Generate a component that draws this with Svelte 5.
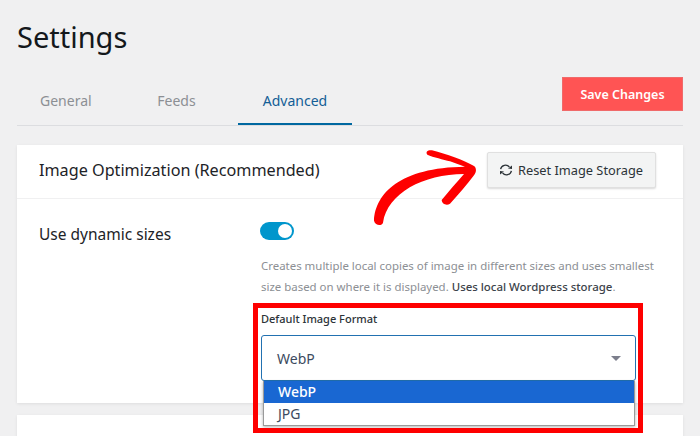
<script>
	const tabs = ['General', 'Feeds', 'Advanced'];
	let active = 'Advanced';
</script>

<div class="page">
	<h1>Settings</h1>

	<div class="tabbar">
		<nav>
			{#each tabs as tab}
				<span class="tab" class:active={tab === active}>{tab}</span>
			{/each}
		</nav>
		<button class="save">Save Changes</button>
	</div>

	<section class="card">
		<header>
			<h2>Image Optimization (Recommended)</h2>
			<button class="reset">
				<svg width="14" height="12" viewBox="0 0 14 12" fill="none" stroke="#2c3338" stroke-width="1.3">
					<path d="M1.6 5.2A5 5 0 0 1 10.4 3" />
					<path d="M12.4 6.8A5 5 0 0 1 3.6 9" />
					<path d="M9 4.6L13 5V1.6Z" fill="#2c3338" stroke="none" />
					<path d="M5 7.4L1 7V10.4Z" fill="#2c3338" stroke="none" />
				</svg>
				Reset Image Storage
			</button>
		</header>

		<div class="row">
			<div class="label">Use dynamic sizes</div>
			<div class="control">
				<div class="toggle"><span></span></div>
				<p>
					Creates multiple local copies of image in different sizes and uses smallest
					size based on where it is displayed. <b>Uses local Wordpress storage</b>.
				</p>
				<div class="field-label">Default Image Format</div>
				<div class="select">
					<span>WebP</span>
					<i></i>
				</div>
				<div class="options">
					<div class="option selected">WebP</div>
					<div class="option">JPG</div>
				</div>
			</div>
		</div>
	</section>

	<section class="card next"></section>

	<div class="highlight"></div>
	<svg class="arrow" width="350" height="180" viewBox="0 0 1050 540">
		<path
			fill="#fe0000"
			d="M72 482C76 400 150 322 345 320L300 304C280 298 250 292 232 284C226 276 232 270 246 271C290 282 340 300 372 318C380 324 380 336 372 346C350 375 325 405 300 431C290 438 276 432 275 420C295 395 320 368 342 342C220 342 112 400 99 488C96 498 76 498 72 482Z"
		/>
	</svg>
</div>

<style>
	:global(body) {
		margin: 0;
		background: #f0f0f1;
	}

	.page {
		position: relative;
		box-sizing: border-box;
		width: 700px;
		height: 436px;
		overflow: hidden;
		padding: 0 17px;
		font-family: 'Noto Sans', 'Open Sans', sans-serif;
		color: #1d2327;
	}

	h1 {
		margin: 0;
		padding-top: 17px;
		height: 75px;
		box-sizing: border-box;
		font-size: 29px;
		line-height: 40px;
		font-weight: 400;
		color: #14181c;
	}

	.tabbar {
		display: flex;
		justify-content: space-between;
		height: 50px;
		border-bottom: 1px solid #dcdde0;
	}

	nav {
		display: flex;
	}

	.tab {
		display: flex;
		align-items: center;
		justify-content: center;
		height: 50px;
		box-sizing: border-box;
		font-size: 14px;
		color: #8c8f94;
	}

	.tab:nth-child(1) {
		width: 98px;
		justify-content: flex-start;
		padding-left: 23px;
	}

	.tab:nth-child(2) {
		width: 123px;
	}

	.tab.active {
		width: 114px;
		color: #135e96;
		border-bottom: 2px solid #0068a0;
		padding-top: 2px;
	}

	.save {
		align-self: flex-start;
		margin-top: 2px;
		width: 121px;
		height: 34px;
		background: #ff5454;
		border: 1px solid #f06a6a;
		color: #fff;
		font: 600 12.5px 'Noto Sans', sans-serif;
	}

	.card {
		margin-top: 19px;
		background: #fff;
		height: 258px;
		box-shadow: 0 1px 3px rgba(0, 0, 0, 0.08);
	}

	.card.next {
		margin-top: 12px;
		height: 60px;
	}

	header {
		display: flex;
		align-items: center;
		justify-content: space-between;
		box-sizing: border-box;
		height: 54px;
		padding: 0 27px 3px 22px;
		border-bottom: 1px solid #f0f0f1;
	}

	h2 {
		margin: 0;
		font-size: 16.2px;
		font-weight: 400;
		color: #1d2327;
	}

	.reset {
		display: flex;
		align-items: center;
		gap: 5px;
		width: 169px;
		height: 36px;
		padding: 0 0 0 11px;
		background: #f3f4f4;
		border: 1px solid #e0e0e0;
		border-radius: 2px;
		box-shadow: 0 1px 2px rgba(0, 0, 0, 0.15);
		font: 400 12.8px 'Noto Sans', sans-serif;
		color: #2c3338;
	}

	.row {
		display: flex;
		padding: 23px 0 0 22px;
	}

	.label {
		width: 221px;
		font-size: 15.5px;
		line-height: 24px;
	}

	.control {
		width: 400px;
	}

	.toggle {
		display: flex;
		justify-content: flex-end;
		align-items: center;
		box-sizing: border-box;
		width: 34px;
		height: 18px;
		padding-right: 2px;
		border-radius: 9px;
		background: #0096cc;
	}

	.toggle span {
		width: 14px;
		height: 14px;
		border-radius: 50%;
		background: #fff;
	}

	p {
		margin: 15px 0 0 1px;
		font-size: 11.45px;
		line-height: 21px;
		color: #8c8f94;
	}

	p b {
		font-weight: 500;
		color: #3c434a;
	}

	.field-label {
		margin: 14px 0 0 1px;
		font-size: 11px;
		line-height: 15px;
		font-weight: 500;
		color: #2c3338;
	}

	.select {
		display: flex;
		align-items: center;
		justify-content: space-between;
		box-sizing: border-box;
		width: 375px;
		height: 46px;
		margin: 9px 0 0 1px;
		padding: 0 14px 0 15px;
		border: 1px solid #2271b1;
		border-radius: 3px;
		font-size: 14px;
		color: #3c4a60;
	}

	.select i {
		width: 0;
		height: 0;
		border: 5px solid transparent;
		border-top: 5px solid #7c7f8c;
		border-bottom: 0;
	}

	.options {
		position: relative;
		box-sizing: border-box;
		width: 372px;
		margin: 0 0 0 3px;
		background: #fff;
		border: 1px solid #9a9a9a;
		border-top: 0;
		box-shadow: 0 1px 3px rgba(0, 0, 0, 0.3);
		font-size: 14px;
		color: #3c4a60;
	}

	.option {
		height: 22px;
		line-height: 21px;
		padding-left: 14px;
	}

	.option.selected {
		background: #1967d2;
		color: #fff;
		font-weight: 500;
	}

	.highlight {
		position: absolute;
		left: 253px;
		top: 303px;
		width: 390px;
		height: 130px;
		box-sizing: border-box;
		border: 5px solid #fe0000;
	}

	.arrow {
		position: absolute;
		left: 350px;
		top: 60px;
	}
</style>
